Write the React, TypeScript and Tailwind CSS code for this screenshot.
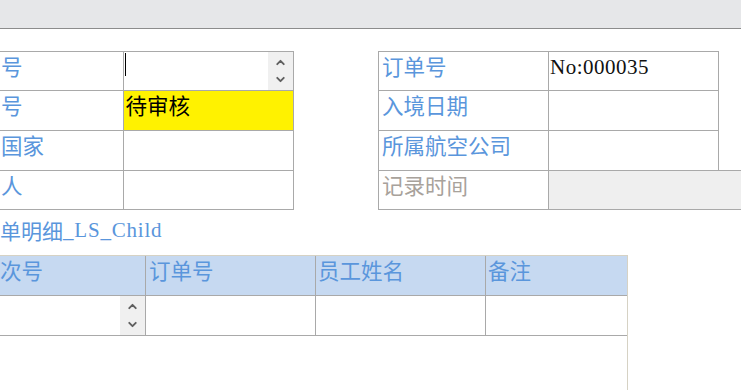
import { ChevronUp, ChevronDown } from "lucide-react";

const cjk = { fontFamily: '"Noto Sans CJK SC", "Noto Sans", sans-serif' };
const serif = { fontFamily: '"Liberation Serif", "Noto Sans CJK SC", serif' };

const Spinner = () => (
  <div className="flex h-full w-[25px] flex-col items-center justify-around bg-[#f0f0f0] py-[2px] text-[#5f5f5f]">
    <ChevronUp className="h-[13px] w-[13px]" strokeWidth={3.5} />
    <ChevronDown className="h-[13px] w-[13px]" strokeWidth={3.5} />
  </div>
);

type Row = { label: string; h: string };

const leftRows: Row[] = [
  { label: "号", h: "h-[39px]" },
  { label: "号", h: "h-[40px]" },
  { label: "国家", h: "h-[40px]" },
  { label: "人", h: "h-[39px]" },
];

const rightRows: Row[] = [
  { label: "订单号", h: "h-[39px]" },
  { label: "入境日期", h: "h-[40px]" },
  { label: "所属航空公司", h: "h-[40px]" },
];

export default function App() {
  return (
    <div className="relative h-[390px] w-[741px] overflow-hidden bg-white" style={cjk}>
      {/* title bar */}
      <div className="h-[29px] border-b border-[#8c8c8c] bg-[#e6e7e9]" />

      <div className="mt-[22px] flex items-start">
        {/* left table */}
        <div className="ml-[-1px] w-[295px] border-l border-t border-[#a9a9a9]">
          {leftRows.map((row, i) => (
            <div key={i} className={`flex ${row.h}`}>
              <div className="w-[124px] border-b border-r border-[#a9a9a9] pl-[1px] text-[21.5px] leading-[27px] text-[#5a96dc]">
                {row.label}
              </div>
              <div
                className={`flex w-[171px] border-b border-r border-[#a9a9a9] ${
                  i === 1 ? "bg-[#fff200]" : "bg-white"
                }`}
              >
                {i === 0 && (
                  <>
                    <div className="flex-1 pl-[1px] pt-[1px]">
                      <div className="h-[23px] w-px bg-black" />
                    </div>
                    <Spinner />
                  </>
                )}
                {i === 1 && (
                  <span className="pl-[2px] text-[21.5px] leading-[27px] text-black">待审核</span>
                )}
              </div>
            </div>
          ))}
        </div>

        {/* right table */}
        <div className="ml-[84px] w-[341px] border-l border-t border-[#a9a9a9]">
          {rightRows.map((row, i) => (
            <div key={i} className={`flex ${row.h}`}>
              <div className="w-[170px] border-b border-r border-[#a9a9a9] pl-[3px] text-[21.5px] leading-[27px] text-[#5a96dc]">
                {row.label}
              </div>
              <div className="w-[170px] border-b border-r border-[#a9a9a9] pl-[1px]">
                {i === 0 && (
                  <span className="text-[21px] leading-[30px] tracking-[0.5px] text-[#111]" style={serif}>
                    No:000035
                  </span>
                )}
              </div>
            </div>
          ))}
          <div className="flex h-[39px] w-[400px]">
            <div className="w-[170px] border-b border-r border-[#a9a9a9] pl-[3px] text-[21.5px] leading-[27px] text-[#a8a29b]">
              记录时间
            </div>
            <div className="mt-[-1px] h-[40px] w-[230px] border-b border-t border-[#a9a9a9] bg-[#efefef]" />
          </div>
        </div>
      </div>

      {/* subform caption */}
      <div className="mt-[6px] flex h-[28px] items-center text-[21px] leading-[28px] text-[#5a96dc]">
        <span>单明细</span>
        <span className="tracking-[0.8px]" style={serif}>
          _LS_Child
        </span>
      </div>

      {/* subform datasheet */}
      <div className="mt-[11px] h-[150px] w-[628px] border-r border-t border-[#d6d2c4]">
        <div className="flex h-[40px] bg-[#c6d9f1] text-[21.5px] leading-[28px] text-[#5a96dc]">
          <div className="w-[146px] border-b border-r border-[#a9a9a9]">次号</div>
          <div className="w-[170px] border-b border-r border-[#a9a9a9] pl-[3px]">订单号</div>
          <div className="w-[170px] border-b border-r border-[#a9a9a9] pl-[2px]">员工姓名</div>
          <div className="flex-1 border-b border-[#a9a9a9] pl-[2px]">备注</div>
        </div>
        <div className="flex h-[40px]">
          <div className="flex w-[146px] justify-end border-b border-r border-[#a9a9a9]">
            <Spinner />
          </div>
          <div className="w-[170px] border-b border-r border-[#a9a9a9]" />
          <div className="w-[170px] border-b border-r border-[#a9a9a9]" />
          <div className="flex-1 border-b border-[#a9a9a9]" />
        </div>
      </div>
    </div>
  );
}
